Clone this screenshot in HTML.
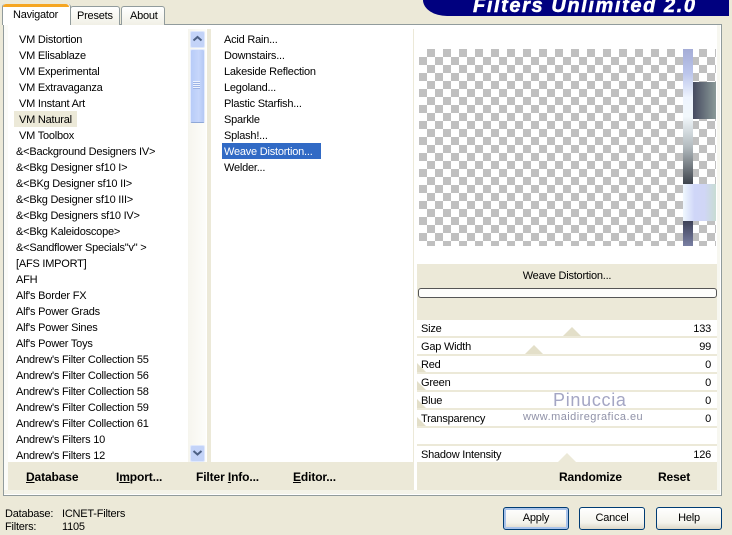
<!DOCTYPE html>
<html><head><meta charset="utf-8">
<style>
html,body{margin:0;padding:0}
body{width:732px;height:534px;position:relative;overflow:hidden;background:#ece9d8;font-family:"Liberation Sans",sans-serif;font-size:11px;letter-spacing:-.22px;color:#000}
.a{position:absolute}
.t{position:absolute;white-space:nowrap;line-height:16px;height:16px;margin-top:1px}
.b{font-weight:bold;font-size:12px;margin-top:0;letter-spacing:-.12px}
.r{position:absolute;left:417px;width:300px;height:16px;background:#fff}
.v{position:absolute;right:21px;line-height:16px;height:16px;margin-top:1px}
.tri{position:absolute;width:0;height:0;border-left:9px solid transparent;border-right:9px solid transparent;border-bottom:9px solid #e3dfc9}
.btn{position:absolute;top:507px;width:64px;height:21px;border:1px solid #003c74;border-radius:3px;background:linear-gradient(#fff,#f4f3ec 70%,#dcd8c8);text-align:center;line-height:21px;font-size:11px}
u{text-decoration:underline}
</style></head><body>

<!-- banner -->
<div class="a" style="left:423px;top:0;width:306px;height:16px;background:#00007f;border-bottom-left-radius:24px 16px"></div>
<div class="a" style="left:473px;top:-4px;white-space:nowrap;color:#fff;font:italic bold 20px/20px 'Liberation Sans',sans-serif;letter-spacing:1.6px;-webkit-text-stroke:.5px #fff">Filters Unlimited 2.0</div>

<!-- main panel -->
<div class="a" style="left:3px;top:24px;width:717px;height:470px;background:#fff;border:1px solid #919b9c"></div>
<div class="a" style="left:4px;top:25px;width:4px;height:465px;background:#fbfbf8"></div>
<div class="a" style="left:717px;top:25px;width:3px;height:465px;background:#f7f7f0"></div>
<div class="a" style="left:4px;top:490px;width:716px;height:4px;background:#f4f3e9"></div>

<!-- tabs -->
<div class="a" style="left:70px;top:6px;width:48px;height:18px;background:linear-gradient(#fff,#f1f0e6);border:1px solid #919b9c;border-bottom:none;border-radius:3px 3px 0 0"></div>
<div class="t" style="left:77px;top:7px">Presets</div>
<div class="a" style="left:121px;top:6px;width:42px;height:18px;background:linear-gradient(#fff,#f1f0e6);border:1px solid #919b9c;border-bottom:none;border-radius:3px 3px 0 0"></div>
<div class="t" style="left:130px;top:7px">About</div>
<div class="a" style="left:2px;top:4px;width:67px;height:21px;background:#fff;border:1px solid #919b9c;border-bottom:none;border-top:none;border-radius:3px 3px 0 0"></div>
<div class="a" style="left:3px;top:4px;width:66px;height:3px;background:#f5a623;border-radius:3px 3px 0 0"></div>
<div class="t" style="left:13px;top:6px">Navigator</div>

<!-- left list scrollbar -->
<div class="a" style="left:188px;top:29px;width:18px;height:433px;background:linear-gradient(90deg,#f6f5ee,#fdfdfa)"></div>
<div class="a" style="left:207px;top:29px;width:4px;height:433px;background:#ece9d8"></div>
<div class="a" style="left:190px;top:31px;width:13px;height:15px;background:#c3d3f8;border:1px solid #dfe8fc;border-radius:2px"></div>
<svg class="a" style="left:191px;top:34px" width="13" height="10"><path d="M2.5 6.5L6.5 3L10.5 6.5" fill="none" stroke="#4d6185" stroke-width="2"/></svg>
<div class="a" style="left:190px;top:49px;width:13px;height:72px;background:linear-gradient(90deg,#b8ccf8,#c6d6fb 60%,#b4c8f4);border:1px solid #e3ebfd;border-bottom-color:#8fa8d8;border-radius:2px"></div>
<div class="a" style="left:193px;top:81px;width:7px;height:8px;background:repeating-linear-gradient(#eef3fe 0 1px,#9db4e6 1px 2px)"></div>
<div class="a" style="left:190px;top:445px;width:13px;height:15px;background:#c3d3f8;border:1px solid #dfe8fc;border-radius:2px"></div>
<svg class="a" style="left:191px;top:448px" width="13" height="10"><path d="M2.5 3L6.5 6.5L10.5 3" fill="none" stroke="#4d6185" stroke-width="2"/></svg>

<!-- left list -->
<div class="a" style="left:14px;top:111px;width:63px;height:16px;background:#ece9d8"></div>
<div class="t" style="left:19px;top:31px">VM Distortion</div>
<div class="t" style="left:19px;top:47px">VM Elisablaze</div>
<div class="t" style="left:19px;top:63px">VM Experimental</div>
<div class="t" style="left:19px;top:79px">VM Extravaganza</div>
<div class="t" style="left:19px;top:95px">VM Instant Art</div>
<div class="t" style="left:19px;top:111px">VM Natural</div>
<div class="t" style="left:19px;top:127px">VM Toolbox</div>
<div class="t" style="left:16px;top:143px">&amp;&lt;Background Designers IV&gt;</div>
<div class="t" style="left:16px;top:159px">&amp;&lt;Bkg Designer sf10 I&gt;</div>
<div class="t" style="left:16px;top:175px">&amp;&lt;BKg Designer sf10 II&gt;</div>
<div class="t" style="left:16px;top:191px">&amp;&lt;Bkg Designer sf10 III&gt;</div>
<div class="t" style="left:16px;top:207px">&amp;&lt;Bkg Designers sf10 IV&gt;</div>
<div class="t" style="left:16px;top:223px">&amp;&lt;Bkg Kaleidoscope&gt;</div>
<div class="t" style="left:16px;top:239px">&amp;&lt;Sandflower Specials"v" &gt;</div>
<div class="t" style="left:16px;top:255px">[AFS IMPORT]</div>
<div class="t" style="left:16px;top:271px">AFH</div>
<div class="t" style="left:16px;top:287px">Alf's Border FX</div>
<div class="t" style="left:16px;top:303px">Alf's Power Grads</div>
<div class="t" style="left:16px;top:319px">Alf's Power Sines</div>
<div class="t" style="left:16px;top:335px">Alf's Power Toys</div>
<div class="t" style="left:16px;top:351px">Andrew's Filter Collection 55</div>
<div class="t" style="left:16px;top:367px">Andrew's Filter Collection 56</div>
<div class="t" style="left:16px;top:383px">Andrew's Filter Collection 58</div>
<div class="t" style="left:16px;top:399px">Andrew's Filter Collection 59</div>
<div class="t" style="left:16px;top:415px">Andrew's Filter Collection 61</div>
<div class="t" style="left:16px;top:431px">Andrew's Filters 10</div>
<div class="t" style="left:16px;top:447px">Andrew's Filters 12</div>

<!-- middle list -->
<div class="a" style="left:222px;top:143px;width:99px;height:16px;background:#316ac5"></div>
<div class="t" style="left:224px;top:31px">Acid Rain...</div>
<div class="t" style="left:224px;top:47px">Downstairs...</div>
<div class="t" style="left:224px;top:63px">Lakeside Reflection</div>
<div class="t" style="left:224px;top:79px">Legoland...</div>
<div class="t" style="left:224px;top:95px">Plastic Starfish...</div>
<div class="t" style="left:224px;top:111px">Sparkle</div>
<div class="t" style="left:224px;top:127px">Splash!...</div>
<div class="t" style="left:224px;top:143px;color:#fff">Weave Distortion...</div>
<div class="t" style="left:224px;top:159px">Welder...</div>

<!-- bottom left bar -->
<div class="a" style="left:8px;top:462px;width:405px;height:28px;background:#ece9d8"></div>
<div class="t b" style="left:26px;top:469px"><u>D</u>atabase</div>
<div class="t b" style="left:116px;top:469px">I<u>m</u>port...</div>
<div class="t b" style="left:196px;top:469px">Filter <u>I</u>nfo...</div>
<div class="t b" style="left:293px;top:469px"><u>E</u>ditor...</div>

<!-- right column -->
<div class="a" style="left:413px;top:29px;width:1px;height:461px;background:#ece9d8"></div>
<div class="a" style="left:419px;top:49px;width:297px;height:197px;background-color:#fff;background-image:conic-gradient(#c0c0c0 25%,#fff 0 50%,#c0c0c0 0 75%,#fff 0);background-size:16px 16px;background-position:0 0"></div>
<div class="a" style="left:683px;top:49px;width:10px;height:135px;background:linear-gradient(#a4acd6,#bcc6ec 18%,#eef4fe 36%,#f2f8fc 50%,#b4bcc0 72%,#3e444c 100%)"></div>
<div class="a" style="left:693px;top:82px;width:23px;height:37px;background:linear-gradient(90deg,#454a60,#8b9a98)"></div>
<div class="a" style="left:683px;top:184px;width:33px;height:37px;background:linear-gradient(90deg,#f0f8fe,#cfd6f8 35%,#d0d6f6 65%,#c8dcd2)"></div>
<div class="a" style="left:683px;top:221px;width:10px;height:25px;background:linear-gradient(#3e4258,#7a80a4)"></div>

<div class="a" style="left:417px;top:264px;width:300px;height:56px;background:#ece9d8"></div>
<div class="t" style="left:417px;top:267px;width:300px;text-align:center">Weave Distortion...</div>
<div class="a" style="left:418px;top:288px;width:297px;height:8px;border:1px solid #555;border-radius:3px;background:#fdfdfb"></div>

<!-- sliders -->
<div class="a" style="left:417px;top:320px;width:300px;height:142px;background:#ece9d8"></div>
<div class="r" style="top:320px"></div><div class="r" style="top:338px"></div><div class="r" style="top:356px"></div><div class="r" style="top:374px"></div><div class="r" style="top:392px"></div><div class="r" style="top:410px"></div><div class="r" style="top:428px"></div><div class="r" style="top:446px"></div>
<div class="tri" style="left:563px;top:327px"></div>
<div class="tri" style="left:525px;top:345px"></div>
<div class="a" style="left:417px;top:363px;width:0;height:0;border-right:9px solid transparent;border-bottom:9px solid #e3dfc9"></div>
<div class="a" style="left:417px;top:381px;width:0;height:0;border-right:9px solid transparent;border-bottom:9px solid #e3dfc9"></div>
<div class="a" style="left:417px;top:399px;width:0;height:0;border-right:9px solid transparent;border-bottom:9px solid #e3dfc9"></div>
<div class="a" style="left:417px;top:417px;width:0;height:0;border-right:9px solid transparent;border-bottom:9px solid #e3dfc9"></div>

<div class="t" style="left:421px;top:320px">Size</div><div class="v" style="top:320px">133</div>
<div class="t" style="left:421px;top:338px">Gap Width</div><div class="v" style="top:338px">99</div>
<div class="t" style="left:421px;top:356px">Red</div><div class="v" style="top:356px">0</div>
<div class="t" style="left:421px;top:374px">Green</div><div class="v" style="top:374px">0</div>
<div class="t" style="left:421px;top:392px">Blue</div><div class="v" style="top:392px">0</div>
<div class="t" style="left:421px;top:410px">Transparency</div><div class="v" style="top:410px">0</div>
<div class="t" style="left:421px;top:446px">Shadow Intensity</div><div class="v" style="top:446px">126</div>

<!-- watermark -->
<div class="t" style="left:553px;top:389px;color:#a4a6c4;font-size:18px;line-height:20px;height:20px;letter-spacing:.7px">Pinuccia</div>
<div class="t" style="left:523px;top:408px;color:#9092a8;font-size:11px;letter-spacing:.45px">www.maidiregrafica.eu</div>

<!-- bottom right bar -->
<div class="a" style="left:417px;top:462px;width:300px;height:28px;background:#ece9d8"></div>
<div class="tri" style="left:558px;top:453px;border-bottom-color:#ece9d8"></div>
<div class="t b" style="left:559px;top:469px">Randomize</div>
<div class="t b" style="left:658px;top:469px">Reset</div>

<!-- status -->
<div class="t" style="left:5px;top:505px">Database:</div>
<div class="t" style="left:62px;top:505px">ICNET-Filters</div>
<div class="t" style="left:5px;top:518px">Filters:</div>
<div class="t" style="left:62px;top:518px">1105</div>

<!-- buttons -->
<div class="btn" style="left:503px;box-shadow:inset 0 0 0 2px #a9c3ea">Apply</div>
<div class="btn" style="left:579px">Cancel</div>
<div class="btn" style="left:656px">Help</div>

</body></html>
